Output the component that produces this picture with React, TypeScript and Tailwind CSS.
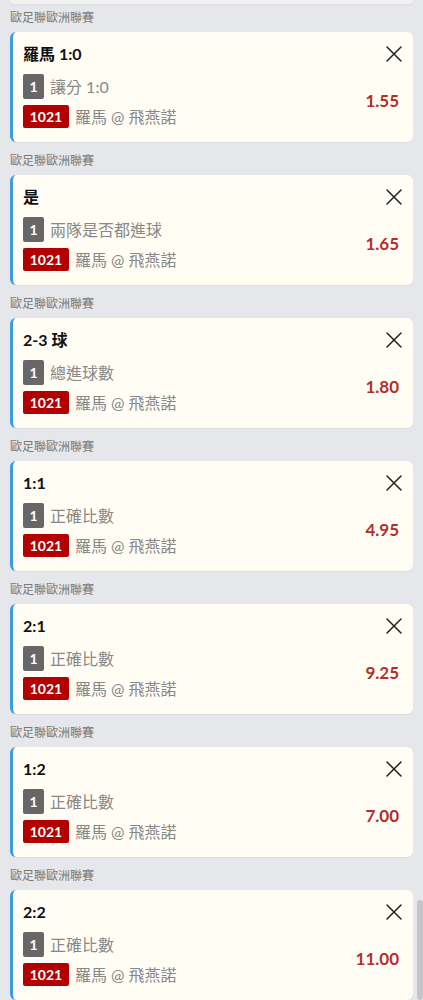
import React from "react";

type Bet = { title: string; market: string; odds: string };

const bets: Bet[] = [
  { title: "羅馬 1:0", market: "讓分 1:0", odds: "1.55" },
  { title: "是", market: "兩隊是否都進球", odds: "1.65" },
  { title: "2-3 球", market: "總進球數", odds: "1.80" },
  { title: "1:1", market: "正確比數", odds: "4.95" },
  { title: "2:1", market: "正確比數", odds: "9.25" },
  { title: "1:2", market: "正確比數", odds: "7.00" },
  { title: "2:2", market: "正確比數", odds: "11.00" },
];

const font = {
  fontFamily: 'Lato, "Noto Sans CJK TC", "Noto Sans", sans-serif',
};

function CloseIcon() {
  return (
    <svg width="16" height="16" viewBox="0 0 16 16" fill="none">
      <path d="M1 1L15 15M15 1L1 15" stroke="#222" strokeWidth="1.5" strokeLinecap="round" />
    </svg>
  );
}

function Card({ bet }: { bet: Bet }) {
  return (
    <div className="relative h-[110px] rounded-[6px] bg-[#fffdf4] border-l-[3px] border-[#3d9be0] pl-[10px] pr-[14px] pt-[12px] flex shadow-[0_1px_1px_rgba(0,0,0,0.04)]">
      <div className="flex-1 flex flex-col">
        <div className="h-[20px] flex items-center text-[16px] font-bold text-[#111] leading-[20px]">
          {bet.title}
        </div>
        <div className="mt-[10px] flex items-center h-[25px]">
          <div className="w-[21px] h-[25px] rounded-[2px] bg-[#676767] text-white text-[14px] font-bold flex items-center justify-center">
            1
          </div>
          <div className="ml-[6px] text-[16px] text-[#888] leading-[20px]">{bet.market}</div>
        </div>
        <div className="mt-[6px] flex items-center h-[23px]">
          <div className="w-[46px] h-[23px] rounded-[2px] bg-[#b30000] text-white text-[14px] font-bold flex items-center justify-center">
            1021
          </div>
          <div className="ml-[6px] text-[16px] text-[#888] leading-[20px]">羅馬 @ 飛燕諾</div>
        </div>
      </div>
      <div className="flex flex-col items-end">
        <div className="h-[20px] flex items-center mr-[-3px]">
          <CloseIcon />
        </div>
        <div className="mt-[25px] text-[17px] font-bold text-[#b22f2a] leading-[24px]">{bet.odds}</div>
      </div>
    </div>
  );
}

export default function App() {
  return (
    <div style={font} className="relative w-[423px] h-[1000px] overflow-hidden bg-[#e6e7ea]">
      <div className="mx-[10px] h-[4px] rounded-b-[6px] bg-[#f1f1f1] shadow-[0_1px_2px_rgba(0,0,0,0.05)]" />
      <div className="px-[10px] pt-[6px] flex flex-col gap-[11px]">
        {bets.map((b, i) => (
          <div key={i}>
            <div className="h-[16px] mb-[6px] text-[12px] leading-[16px] text-[#777]">歐足聯歐洲聯賽</div>
            <Card bet={b} />
          </div>
        ))}
      </div>
      <div className="absolute right-0 top-[900px] w-[6px] h-[100px] rounded-[3px] bg-[#c6c6c8]" />
    </div>
  );
}
